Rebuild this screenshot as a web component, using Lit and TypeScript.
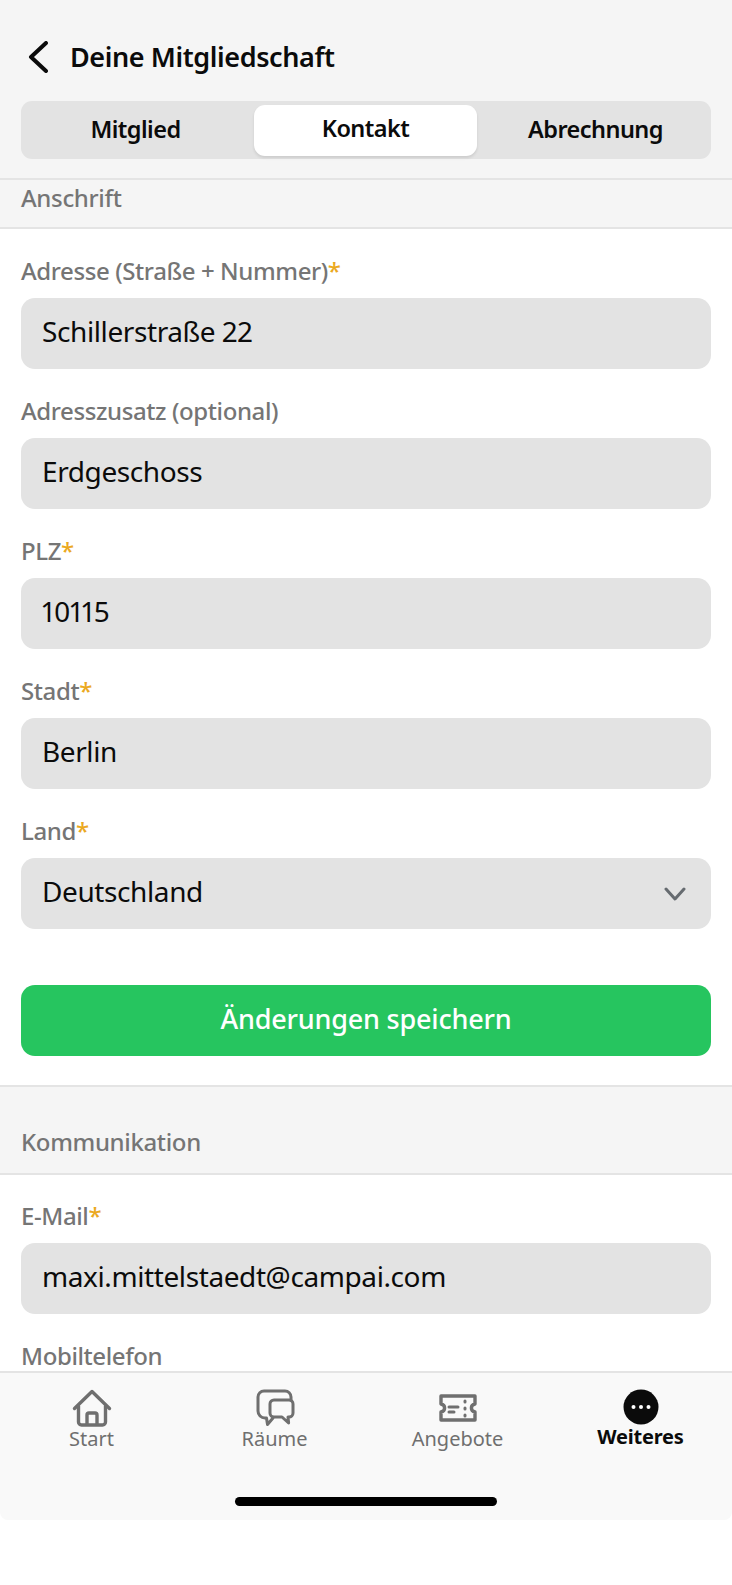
import { LitElement, html, css } from 'lit';
import { customElement } from 'lit/decorators.js';

const homeIcon = html`<svg viewBox="0 0 40 38" width="40" height="38" fill="none" stroke="currentColor" stroke-width="3.4" stroke-linecap="round" stroke-linejoin="round">
  <path d="M2.5 19.5 20 2.5l17.5 17" />
  <path d="M6.5 17v16a3 3 0 0 0 3 3h21a3 3 0 0 0 3-3V17" />
  <path d="M15 35V26a2 2 0 0 1 2-2h6a2 2 0 0 1 2 2v9" />
</svg>`;

const chatIcon = html`<svg viewBox="0 0 40 38" width="40" height="38" fill="none" stroke="currentColor" stroke-width="3" stroke-linecap="round" stroke-linejoin="round">
  <path d="M36 11V8a6 6 0 0 0-6-6H9a6 6 0 0 0-6 6v14a7 7 0 0 0 7 7h1.5l1 6.5L18 29" />
  <path d="M19 11h15a4 4 0 0 1 4 4v9a4 4 0 0 1-4 4h-1l.6 6-6.6-6h-8a4 4 0 0 1-4-4v-9a4 4 0 0 1 4-4z" />
</svg>`;

const ticketIcon = html`<svg viewBox="0 0 40 38" width="40" height="38" fill="none" stroke="currentColor" stroke-linecap="round" stroke-linejoin="round">
  <path stroke-width="3.4" d="M3 7h34v8c-2.6.6-3.6 2.2-3.6 4s1 3.400 3.600 4v8H3v-8c2.600-.6 3.600-2.200 3.600-4S5.600 15.600 3 15z" />
  <path stroke-width="3" d="M11 18h9M11 23h5" />
  <path stroke-width="3" d="M27 12v1M27 19v1M27 26v1" />
</svg>`;

const moreIcon = html`<svg viewBox="0 0 36 36" width="36" height="36">
  <circle cx="18" cy="18" r="17.500" fill="#0b0b0b" />
  <circle cx="10.500" cy="18" r="2" fill="#fff" />
  <circle cx="18" cy="18" r="2" fill="#fff" />
  <circle cx="25.500" cy="18" r="2" fill="#fff" />
</svg>`;

@customElement('app-root')
export class AppRoot extends LitElement {
  static styles = css`
    :host {
      display: block;
      width: 732px;
      height: 1585px;
      background: #fff;
      font-family: 'Noto Sans', 'Open Sans', sans-serif;
      overflow: hidden;
    }
    .app {
      display: flex;
      flex-direction: column;
      height: 1520px;
      border-radius: 0 0 8px 8px;
      overflow: hidden;
    }
    .top {
      background: #f5f5f5;
      padding: 0 21px;
      height: 178px;
      box-sizing: border-box;
      flex: none;
    }
    .title-row {
      display: flex;
      align-items: center;
      height: 101px;
      padding-top: 13px;
      box-sizing: border-box;
      gap: 22px;
    }
    .title-row svg {
      margin-left: 7px;
    }
    .title {
      font-size: 27px;
      font-weight: 600;
      color: #0b0b0b;
      letter-spacing: -0.4px;
      padding-bottom: 1px;
    }
    .tabs {
      display: grid;
      grid-template-columns: 233px 223px 1fr;
      height: 58px;
      background: #e3e3e3;
      border-radius: 11px;
      align-items: center;
    }
    .tab {
      text-align: center;
      font-size: 23.5px;
      font-weight: 600;
      line-height: 56px;
      height: 58px;
      color: #0b0b0b;
      letter-spacing: -0.55px;
    }
    .tab.start {
      padding-right: 4px;
    }
    .tab.end {
      padding-left: 3px;
    }
    .tab.active {
      background: #fff;
      height: 51px;
      line-height: 47px;
      border-radius: 11px;
      box-shadow: 0 2px 3px rgba(0, 0, 0, 0.1);
    }
    .scroll {
      flex: 1;
      min-height: 0;
      overflow: hidden;
      background: #fff;
    }
    .section-head {
      background: #f5f5f5;
      border-top: 2px solid #e4e4e4;
      border-bottom: 2px solid #e4e4e4;
      padding: 0 21px;
      font-size: 24px;
      font-weight: 550;
      color: #757575;
      display: flex;
      align-items: center;
      letter-spacing: -0.35px;
      box-sizing: border-box;
    }
    .section-head.first {
      height: 51px;
      padding-bottom: 13px;
    }
    .section-head.second {
      height: 90px;
      padding-top: 23px;
    }
    .form {
      padding: 23px 21px 29px;
    }
    .form.tail {
      padding-top: 22px;
      padding-bottom: 0;
    }
    .field {
      margin-bottom: 23px;
    }
    .label {
      font-size: 24px;
      font-weight: 550;
      color: #757575;
      height: 38px;
      line-height: 38px;
      margin-bottom: 8px;
      letter-spacing: -0.4px;
    }
    .label b {
      color: #eba91f;
      font-weight: 550;
    }
    .input {
      display: flex;
      align-items: center;
      justify-content: space-between;
      height: 71px;
      box-sizing: border-box;
      padding: 0 25px 6px 21px;
      background: #e3e3e3;
      border-radius: 14px;
      font-size: 28px;
      font-variant-numeric: proportional-nums;
      color: #0b0b0b;
      letter-spacing: -0.4px;
    }
    .input svg {
      margin-top: 6px;
    }
    .save {
      margin-top: 56px;
      height: 71px;
      line-height: 67px;
      text-align: center;
      background: #26c55f;
      border-radius: 14px;
      color: #fff;
      font-size: 27px;
      font-weight: 550;
      letter-spacing: -0.2px;
    }
    .nav {
      flex: none;
      height: 149px;
      box-sizing: border-box;
      background: #f9f9f9;
      border-top: 2px solid #e4e4e4;
      position: relative;
      display: grid;
      grid-template-columns: repeat(4, 1fr);
      align-items: start;
      padding-top: 16px;
    }
    .nav-item {
      display: flex;
      flex-direction: column;
      align-items: center;
      color: #6f6f6f;
      font-size: 20px;
      line-height: 26px;
    }
    .nav-item span {
      margin-top: -1px;
    }
    .nav-item.active {
      color: #0b0b0b;
      font-weight: 700;
      letter-spacing: -0.2px;
    }
    .home-bar {
      position: absolute;
      left: 235px;
      width: 262px;
      bottom: 14px;
      height: 9px;
      border-radius: 5px;
      background: #000;
    }
  `;

  private field(label: string, value: string, required = true, select = false) {
    return html`<div class="field">
      <div class="label">${label}${required ? html`<b>*</b>` : ''}</div>
      <div class="input">
        <span>${value}</span>
        ${select
          ? html`<svg viewBox="0 0 22 14" width="22" height="14" fill="none" stroke="#666b70" stroke-width="3" stroke-linecap="round" stroke-linejoin="round"><path d="M2 2l9 10 9-10" /></svg>`
          : ''}
      </div>
    </div>`;
  }

  render() {
    return html`<div class="app">
        <div class="top">
          <div class="title-row">
            <svg viewBox="0 0 20 32" width="20" height="32" fill="none" stroke="#0b0b0b" stroke-width="4" stroke-linecap="round" stroke-linejoin="round"><path d="M18 2 3 16l15 14" /></svg>
            <div class="title">Deine Mitgliedschaft</div>
          </div>
          <div class="tabs">
            <div class="tab start">Mitglied</div>
            <div class="tab active">Kontakt</div>
            <div class="tab end">Abrechnung</div>
          </div>
        </div>
        <div class="scroll">
          <div class="section-head first">Anschrift</div>
          <div class="form">
            ${this.field('Adresse (Straße + Nummer)', 'Schillerstraße 22')}
            ${this.field('Adresszusatz (optional)', 'Erdgeschoss', false)}
            ${this.field('PLZ', '10115')}
            ${this.field('Stadt', 'Berlin')}
            ${this.field('Land', 'Deutschland', true, true)}
            <div class="save">Änderungen speichern</div>
          </div>
          <div class="section-head second">Kommunikation</div>
          <div class="form tail">
            ${this.field('E-Mail', 'maxi.mittelstaedt@campai.com')}
            <div class="label">Mobiltelefon</div>
          </div>
        </div>
        <div class="nav">
          <div class="nav-item">${homeIcon}<span>Start</span></div>
          <div class="nav-item">${chatIcon}<span>Räume</span></div>
          <div class="nav-item">${ticketIcon}<span>Angebote</span></div>
          <div class="nav-item active">${moreIcon}<span>Weiteres</span></div>
          <div class="home-bar"></div>
        </div>
      </div>`;
  }
}
